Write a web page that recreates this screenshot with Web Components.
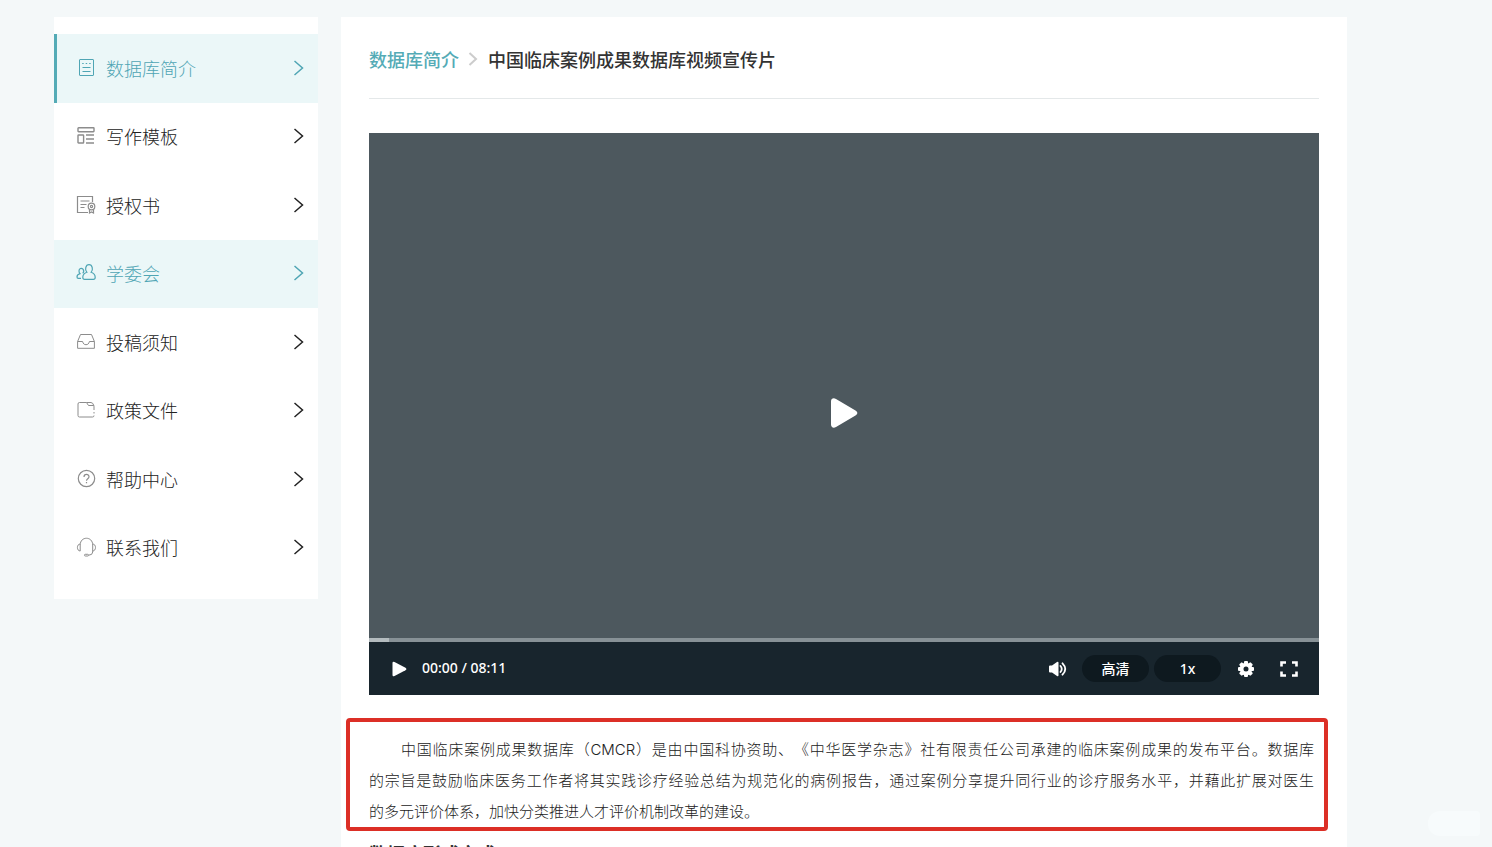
<!DOCTYPE html>
<html lang="zh-CN">
<head>
<meta charset="utf-8">
<title>中国临床案例成果数据库</title>
<style>
html{scrollbar-width:none}
body{margin:0;background:#f4f8f9;color:#333;font-family:"Noto Sans CJK SC","Noto Sans",sans-serif}
</style>
</head>
<body>
<db-page></db-page>
<script>
const ICONS = {
  doc: '<rect x="3.500" y="1.500" width="14" height="16" rx=".5"/><path d="M6.200 5.500h1.500M9.700 5.500h1.500M13.200 5.500h1.500M6.500 9.500h8M6.500 13.500h8"/>',
  template: '<g stroke-width="1.400"><rect x="2" y="1.700" width="16" height="4" rx=".6"/><rect x="2" y="9" width="5.600" height="8" rx=".6"/><path d="M10 9h8M10 13h8M10 17h8"/></g>',
  licence: '<g stroke-width="1.200"><path d="M16.500 7V1.500H1.500v16H12M4.500 6h9M4.500 9.500h6M4.500 12.500h4"/><circle cx="15.500" cy="11.500" r="3.300"/><circle cx="15.500" cy="11.500" r="1.100"/><path d="M13.500 14.500V18l2-1 2 1v-3.500"/></g>',
  people: '<g stroke-width="1.200"><path d="M10.800 9.200C8.600 7 9.500 1.700 13 1.700s4.400 5.300 2.200 7.500c3 1 4 2.800 4 5 0 1.500-.5 2.100-1.800 2.100H8.600c-1.300 0-1.800-.6-1.800-2.100 0-2.200 1-4 4-5z"/><path d="M7 6.200C5.500 4.600 3 5.500 3 8c0 1.200.4 2 1 2.600-2 .6-3 2-3 3.400 0 .9.400 1.400 1.300 1.400H5M7 6.200c.9 1.200.8 3-.2 4.200"/></g>',
  inbox: '<path d="M4.500 2.500h11l2.900 7v6.800H1.600V9.500z"/><path d="M1.600 9.500h5c.5 2.200 1.600 3.200 3.400 3.200s2.900-1 3.400-3.200h5"/>',
  folder: '<path d="M18 10V6.500q0-1-1-1h-4.500l-2-3h-7Q2 2.500 2 4v11.500Q2 17 3.500 17h13q1.500 0 1.500-1.500M10.500 2.500h4.500q2 0 3 3.500M18 12v1.500"/>',
  help: '<g stroke-width="1.200"><circle cx="10.500" cy="9.500" r="8.200"/><path d="M8 8c0-3.500 5-3.300 5-.3 0 2-2.500 2-2.500 4.100M10.500 13v1.200"/></g>',
  headset: '<path d="M4.200 14V8c0-9 12.500-9 12.500 0v7q0 3-4 3.200M4.200 7C.5 7 .5 14 4.200 14M16.700 7c3.700 0 3.700 7 0 7"/><rect x="8.500" y="17.300" width="4" height="1.700" rx=".8"/>'
};
function define(name, html, setup) {
  const t = document.createElement('template');
  t.innerHTML = html;
  customElements.define(name, class extends HTMLElement {
    connectedCallback() {
      if (this.shadowRoot) return;
      const root = this.attachShadow({ mode: 'open' });
      root.append(t.content.cloneNode(true));
      if (setup) setup(this, root);
    }
  });
}

define('menu-item', `<style>
:host{display:block;--tone:#222;--icon:#8c8c8c}
:host([tinted]){--tone:#4fa5b4;--icon:#4fa5b4;background:#ebf7f8}
a{box-sizing:border-box;height:100%;display:flex;align-items:center;gap:10px;padding:0 13px 1px 22px;border-left:0 solid #54abb6;color:var(--tone);text-decoration:none;font-size:18px;font-weight:300;line-height:26px}
:host([current]) a{border-left-width:3px;padding-left:19px}
.i{width:20px;height:20px;flex:none;fill:none;stroke:var(--icon);stroke-width:1}
span{flex:1}
.c{width:13px;height:16px;flex:none;fill:none;stroke:var(--tone);stroke-width:1.500}
</style><a href="#"><svg class="i" viewBox="0 0 20 20" aria-hidden="true"></svg><span><slot></slot></span><svg class="c" viewBox="0 0 13 16" aria-hidden="true"><path d="M2.500 1l8 7-8 7"/></svg></a>`,
(el, root) => {
  root.querySelector('.i').innerHTML = ICONS[el.getAttribute('icon')];
  if (el.hasAttribute('current')) root.querySelector('a').setAttribute('aria-current', 'page');
});

define('side-menu', `<style>
:host{display:block;box-sizing:border-box;background:#fff;padding:17px 0}
nav{display:grid;grid-auto-rows:1fr;min-height:548px}
</style><nav><slot></slot></nav>`);

define('crumb-bar', `<style>
:host{display:block;border-bottom:1px solid #e4e8e9}
nav{display:flex;align-items:center;font-size:18px;line-height:26px;padding:29px 0 26px;font-weight:500}
a{color:#54abb6;text-decoration:none}
svg{width:10px;height:14px;margin:0 10px 0 9px;fill:none;stroke:#ccc;stroke-width:2}
</style><nav aria-label="面包屑"><a href="#">数据库简介</a><svg viewBox="0 0 10 14" aria-hidden="true"><path d="M1.500 1l6.500 6-6.500 6"/></svg><slot></slot></nav>`);

define('video-player', `<style>
:host{display:block;background:#4d585e}
button{font:inherit;color:#fff;border:0;background:none;padding:0;display:flex;align-items:center;justify-content:center;cursor:pointer}
svg{fill:#fff;display:block}
.stage{aspect-ratio:950/505;display:grid;place-items:center}
.big{padding-top:55px}
.track{height:4px;background:#879196}
.track i{display:block;width:20px;height:4px;background:#b3bbbe}
.bar{height:53px;background:#18252d;display:flex;align-items:center;padding:0 20px 0 22px;color:#fff;font:500 14px/20px "Noto Sans","Noto Sans CJK SC",sans-serif}
time{flex:1;margin-left:15px;padding-bottom:2px}
.pill{height:27px;border-radius:14px;background:#0e191f;width:67px;margin-right:5px}
.v{margin-right:14px}.g{margin:0 24px 0 11px}
</style>
<div class="stage"><button class="big" aria-label="播放视频"><svg width="28" height="32" viewBox="0 0 28 32"><path d="M1 4.500C1 1.500 3.500.5 6 2l19.500 11.500c2.500 1.500 2.500 3.500 0 5L6 30c-2.500 1.500-5 .5-5-2.500z"/></svg></button></div>
<div class="track"><i></i></div>
<div class="bar">
<button aria-label="播放"><svg width="16" height="16" viewBox="0 0 16 16"><path d="M1.500 2Q1.500 0 3.500 1l11 5.700q1.800 1.300 0 2.600L3.500 15q-2 1-2-1z"/></svg></button>
<time>00:00 / 08:11</time>
<button class="v" aria-label="音量"><svg width="20" height="18" viewBox="0 0 20 18"><path d="M1 6.500Q1 5.500 2 5.500h2L9 2q1.500-.8 1.500.8v12.400Q10.500 16.800 9 16l-5-3.500H2q-1 0-1-1z"/><path d="M12.500 6q2.500 3 0 6M14.500 3.300q5.500 5.700 0 11.400" fill="none" stroke="#fff" stroke-width="1.800" stroke-linecap="round"/></svg></button>
<button class="pill">高清</button><button class="pill">1x</button>
<button class="g" aria-label="设置"><svg width="18" height="18" viewBox="-9 -9 18 18"><circle r="4.400" fill="none" stroke="#fff" stroke-width="3.800"/><g><rect x="-2" y="-8" width="4" height="3" rx="1"/><rect x="-2" y="5" width="4" height="3" rx="1"/><rect x="-8" y="-2" width="3" height="4" rx="1"/><rect x="5" y="-2" width="3" height="4" rx="1"/></g><g transform="rotate(45)"><rect x="-2" y="-8" width="4" height="3" rx="1"/><rect x="-2" y="5" width="4" height="3" rx="1"/><rect x="-8" y="-2" width="3" height="4" rx="1"/><rect x="5" y="-2" width="3" height="4" rx="1"/></g></svg></button>
<button aria-label="全屏"><svg width="20" height="18" viewBox="0 0 20 18"><path d="M2.500 6.500V2.500h4.500M13 2.500h4.500v4M17.500 11.500v4H13M7 15.500H2.500v-4" fill="none" stroke="#fff" stroke-width="2.600"/></svg></button>
</div>`);

define('intro-note', `<style>
:host{display:block;box-sizing:border-box;border:4px solid #dc2f26;border-radius:4px;margin:23px -9px 0 -23px;padding:12px 10px 0 19px}
p{margin:0;font-family:Inter,"Noto Sans CJK SC",sans-serif;font-size:15px;font-weight:300;line-height:31px;color:#222;text-spacing-trim:space-all}
</style><p><slot></slot></p>`);

define('db-page', `<style>
:host{display:flex;align-items:flex-start;gap:23px;padding:17px 145px 0 54px}
side-menu{flex:0 0 264px}
main{flex:1;min-width:0;background:#fff;padding:0 28px 40px;box-sizing:border-box}
h1{margin:0;font-size:18px;font-weight:500;line-height:26px}
video-player{margin-top:34px}
.full{display:block;text-align-last:justify}
.indent{text-indent:32px}
h2{margin:9px 0 0;font-size:18px;font-weight:700;line-height:26px;color:#333}
.patch{position:fixed;right:12px;bottom:11px;width:52px;height:25px;border-radius:12px 4px 4px 12px;background:#f7fbfc}
</style>
<side-menu>
<menu-item icon="doc" tinted current>数据库简介</menu-item>
<menu-item icon="template">写作模板</menu-item>
<menu-item icon="licence">授权书</menu-item>
<menu-item icon="people" tinted>学委会</menu-item>
<menu-item icon="inbox">投稿须知</menu-item>
<menu-item icon="folder">政策文件</menu-item>
<menu-item icon="help">帮助中心</menu-item>
<menu-item icon="headset">联系我们</menu-item>
</side-menu>
<main>
<crumb-bar><h1>中国临床案例成果数据库视频宣传片</h1></crumb-bar>
<video-player></video-player>
<intro-note><span class="full indent">中国临床案例成果数据库（CMCR）是由中国科协资助、《中华医学杂志》社有限责任公司承建的临床案例成果的发布平台。数据库</span><span class="full">的宗旨是鼓励临床医务工作者将其实践诊疗经验总结为规范化的病例报告，通过案例分享提升同行业的诊疗服务水平，并藉此扩展对医生</span><span>的多元评价体系，加快分类推进人才评价机制改革的建设。</span></intro-note>
<h2>数据库形式方式</h2>
</main>
<div class="patch"></div>`);
</script>
</body>
</html>
